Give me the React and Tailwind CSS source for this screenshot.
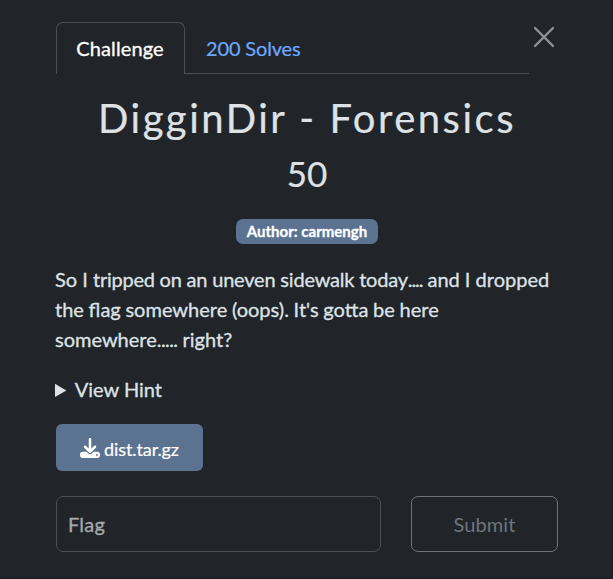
import { FaDownload } from "react-icons/fa6";

export default function App() {
  return (
    <main className="h-[579px] w-[613px] overflow-hidden border-r border-b-2 border-[#1c1f24] bg-[#212529] pl-[56px] pr-[54px] pt-[22px] font-['Lato',sans-serif] text-[20px] leading-[30px] text-[#dee2e6]">
      <header className="flex">
        <nav className="flex h-[52px] w-[473px] items-end">
          <button className="h-[52px] w-[129px] rounded-t-[7px] border border-b-0 border-[#495057] pb-[2px] pr-[1px] tracking-[0.1px] text-white [-webkit-text-stroke:0.3px]">Challenge</button>
          <div className="h-[52px] flex-1 border-b border-[#495057] pl-[21px] pt-[11px] tracking-[-0.15px] text-[#6ea8fe] [-webkit-text-stroke:0.2px]">200 Solves</div>
        </nav>
        <button aria-label="Close" className="ml-[4px] mt-[4px] h-[22px] w-[22px]">
          <svg viewBox="0 0 22 22" className="h-[22px] w-[22px]" stroke="#909294" strokeWidth="2.4" strokeLinecap="round">
            <path d="M2 2 20 20M20 2 2 20" />
          </svg>
        </button>
      </header>
      <h1 className="mt-[19px] whitespace-nowrap text-center text-[40px] leading-[50px] tracking-[2.5px] [-webkit-text-stroke:0.2px]">DigginDir - Forensics</h1>
      <h2 className="mt-[8px] text-center text-[35px] leading-[44px] [-webkit-text-stroke:0.2px]">50</h2>
      <div className="mt-[24px] flex justify-center">
        <span className="flex h-[25px] w-[142px] items-center justify-center rounded-[7px] bg-[#5b7290] text-[15px] font-bold leading-none text-white [-webkit-text-stroke:0.3px]">Author: carmengh</span>
      </div>
      <p className="-ml-px mt-[20px] whitespace-nowrap [-webkit-text-stroke:0.3px]">
        So I <span className="tracking-[-0.25px]">tripped </span><span className="tracking-[-0.2px]">on an uneven sidewalk today</span><span className="tracking-[-1.1px]">....</span> and I dropped<br />
        <span className="[word-spacing:-0.4px]">the flag somewhere (oops). It's gotta be here</span><br />
        somewhere<span className="tracking-[-0.6px]">.....</span> right?
      </p>
      <details className="-ml-px mt-[20px] [-webkit-text-stroke:0.3px]">
        <summary><span className="-ml-[1.5px]">View Hint</span></summary>
      </details>
      <button className="mt-[20px] flex h-[47px] w-[147px] items-center justify-center gap-[4px] rounded-[6px] bg-[#5b7290] text-[18px] text-white">
        <FaDownload className="h-[20px] w-[20px]" />
        <span className="mt-[2px] tracking-[-0.1px] [-webkit-text-stroke:0.2px]">dist.tar.gz</span>
      </button>
      <form className="mt-[25px] flex justify-between">
        <input placeholder="Flag" className="h-[56px] w-[325px] rounded-[7px] border border-[#495057] px-[11px] tracking-[0.2px] [-webkit-text-stroke:0.3px] placeholder:text-[#a6a9ad]" />
        <button className="h-[56px] w-[147px] rounded-[7px] border border-[#6c757d] tracking-[0.1px] text-[#6c757d]">Submit</button>
      </form>
    </main>
  );
}
